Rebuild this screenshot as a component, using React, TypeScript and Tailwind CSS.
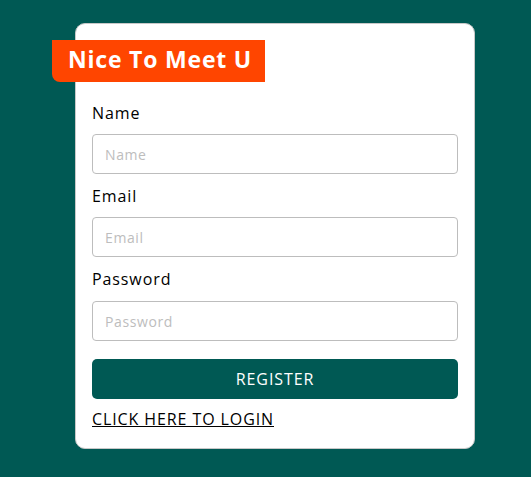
export default function App() {
  return (
    <div
      className="min-h-[477px] bg-[#005954] pt-[23px] pl-[75px] tracking-[0.9px]"
      style={{ fontFamily: '"Open Sans", "Liberation Sans", sans-serif' }}
    >
      <div className="w-[400px] h-[426px] bg-white rounded-[10px] border border-[#c8c8c8] px-[16px] pt-[16px]">
        <div className="-ml-[40px] w-[213px] h-[42px] bg-[#ff4500] rounded-bl-[8px] pl-[16px] pb-[3px] flex items-center text-white text-[23px] font-bold tracking-[0.8px]">
          Nice To Meet U
        </div>

        <form className="mt-[19px] flex flex-col" onSubmit={(e) => e.preventDefault()}>
          <label className="text-[16px] leading-6 text-black">Name</label>
          <input
            placeholder="Name"
            className="mt-[9px] h-10 w-full rounded border border-[#bdbdbd] px-3 text-[14px] tracking-[0.6px] placeholder:text-[#bdbdbd] outline-none"
          />
          <label className="mt-[10px] text-[16px] leading-6 text-black">Email</label>
          <input
            placeholder="Email"
            className="mt-[9px] h-10 w-full rounded border border-[#bdbdbd] px-3 text-[14px] tracking-[0.6px] placeholder:text-[#bdbdbd] outline-none"
          />
          <label className="mt-[10px] text-[16px] leading-6 text-black">Password</label>
          <input
            type="password"
            placeholder="Password"
            className="mt-[10px] h-10 w-full rounded border border-[#bdbdbd] px-3 text-[14px] tracking-[0.6px] placeholder:text-[#bdbdbd] outline-none"
          />
          <button className="mt-[18px] h-10 w-full rounded-[5px] bg-[#005954] text-white text-[16px]">
            REGISTER
          </button>
          <a href="#" className="mt-2 self-start text-[16px] leading-6 text-black underline">
            CLICK HERE TO LOGIN
          </a>
        </form>
      </div>
    </div>
  )
}
